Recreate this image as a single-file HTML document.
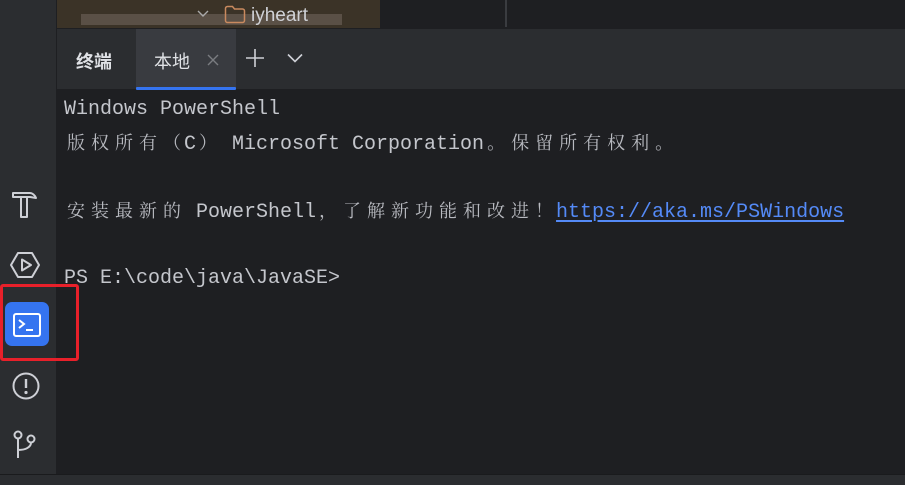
<!DOCTYPE html>
<html><head><meta charset="utf-8"><style>
*{margin:0;padding:0;box-sizing:border-box}
body{width:905px;height:485px;overflow:hidden;background:#1e1f22;position:relative;font-family:"Liberation Sans","Noto Sans CJK SC",sans-serif}
.abs{position:absolute}
.term{position:absolute;left:64px;top:93px;font-family:"Liberation Mono","Noto Sans CJK SC",monospace;font-size:20px;line-height:33px;color:#c4c6cc;white-space:pre}
.c{display:inline-block;width:24px;text-align:center;font-family:"Noto Serif CJK SC","Noto Sans CJK SC",serif;font-size:18px;color:#b8bac0}
a{color:#548af7;text-decoration:underline;text-underline-offset:3px}
</style></head><body>
<div class="abs" style="left:57px;top:0;width:323px;height:28px;background:#3b3327"></div>
<div class="abs" style="left:81px;top:14px;width:261px;height:11px;background:#5a5046"></div>
<svg class="abs" style="left:196px;top:7px" width="14" height="14" viewBox="0 0 14 14"><path d="M2 4l5 5 5-5" fill="none" stroke="#aaa" stroke-width="1.4"/></svg>
<svg class="abs" style="left:224px;top:5px" width="22" height="19" viewBox="0 0 22 19"><path d="M1.5 3.5a2 2 0 0 1 2-2h5l2 2.5h8a2 2 0 0 1 2 2v9.5a2 2 0 0 1-2 2h-15a2 2 0 0 1-2-2z" fill="none" stroke="#c98a5f" stroke-width="1.5"/></svg>
<div class="abs" style="left:251px;top:5px;font-size:19px;color:#cfd1d6">iyheart</div>
<div class="abs" style="left:505px;top:0;width:2px;height:27px;background:#3a3c40"></div>
<div class="abs" style="left:57px;top:29px;width:848px;height:60px;background:#2b2d30"></div>
<div class="abs" style="left:76px;top:48px;font-size:18px;font-weight:bold;color:#dfe1e5">终端</div>
<div class="abs" style="left:136px;top:29px;width:100px;height:60px;background:#393b40"></div>
<div class="abs" style="left:136px;top:87px;width:100px;height:3px;background:#3574f0;border-radius:1px"></div>
<div class="abs" style="left:154px;top:48px;font-size:18px;color:#dfe1e5">本地</div>
<svg class="abs" style="left:207px;top:54px" width="12" height="12" viewBox="0 0 12 12"><path d="M1 1l10 10M11 1L1 11" stroke="#7a7c80" stroke-width="1.4"/></svg>
<svg class="abs" style="left:245px;top:48px" width="20" height="20" viewBox="0 0 20 20"><path d="M10 1v18M1 10h18" stroke="#ced0d6" stroke-width="1.6"/></svg>
<svg class="abs" style="left:287px;top:53px" width="16" height="10" viewBox="0 0 16 10"><path d="M1 1.5l7 7 7-7" fill="none" stroke="#ced0d6" stroke-width="1.6"/></svg>
<div class="abs" style="left:0;top:0;width:56px;height:474px;background:#2b2d30"></div>
<div class="abs" style="left:0;top:474px;width:905px;height:11px;background:#2b2d30;border-top:1px solid #1a1b1d"></div>
<svg class="abs" style="left:11px;top:190px" width="28" height="30" viewBox="0 0 28 30"><path d="M2 3h17c2 0 5 2 6 5l-6-1H2z" fill="none" stroke="#ced0d6" stroke-width="2" stroke-linejoin="round"/><path d="M10 7v20h6V7" fill="none" stroke="#ced0d6" stroke-width="2" stroke-linejoin="round"/></svg>
<svg class="abs" style="left:10px;top:250px" width="30" height="30" viewBox="0 0 30 30"><path d="M8 3h14l7 12-7 12H8L1 15z" fill="none" stroke="#ced0d6" stroke-width="2" stroke-linejoin="round"/><path d="M12 9.5v11l9-5.5z" fill="none" stroke="#ced0d6" stroke-width="2" stroke-linejoin="round"/></svg>
<div class="abs" style="left:5px;top:302px;width:44px;height:44px;background:#3574f0;border-radius:7px"></div>
<svg class="abs" style="left:13px;top:313px" width="28" height="24" viewBox="0 0 28 24"><rect x="1" y="1" width="26" height="22" rx="2" fill="none" stroke="#fff" stroke-width="2"/><path d="M6 7l5 4-5 4M13 17h7" fill="none" stroke="#fff" stroke-width="2"/></svg>
<div class="abs" style="left:0;top:284px;width:79px;height:77px;border:3.5px solid #e8202a;border-radius:3px"></div>
<svg class="abs" style="left:11px;top:371px" width="30" height="30" viewBox="0 0 30 30"><circle cx="15" cy="15" r="12.5" fill="none" stroke="#ced0d6" stroke-width="2"/><path d="M15 8v9" stroke="#ced0d6" stroke-width="2.4"/><circle cx="15" cy="21.5" r="1.6" fill="#ced0d6"/></svg>
<svg class="abs" style="left:12px;top:430px" width="26" height="30" viewBox="0 0 26 30"><circle cx="6" cy="5" r="3.5" fill="none" stroke="#ced0d6" stroke-width="2"/><circle cx="19" cy="9" r="3.5" fill="none" stroke="#ced0d6" stroke-width="2"/><path d="M6 8.5V28M6 20c8 0 13-3 13-7.5" fill="none" stroke="#ced0d6" stroke-width="2"/></svg>
<div class="term">Windows PowerShell
<span class="c">版</span><span class="c">权</span><span class="c">所</span><span class="c">有</span><span class="c">（</span>C<span class="c">）</span> Microsoft Corporation<span class="c">。</span><span class="c">保</span><span class="c">留</span><span class="c">所</span><span class="c">有</span><span class="c">权</span><span class="c">利</span><span class="c">。</span>

<span class="c">安</span><span class="c">装</span><span class="c">最</span><span class="c">新</span><span class="c">的</span> PowerShell<span class="c">，</span><span class="c">了</span><span class="c">解</span><span class="c">新</span><span class="c">功</span><span class="c">能</span><span class="c">和</span><span class="c">改</span><span class="c">进</span><span class="c">！</span><a>https://aka.ms/PSWindows</a>

PS E:\code\java\JavaSE&gt;</div>
</body></html>
